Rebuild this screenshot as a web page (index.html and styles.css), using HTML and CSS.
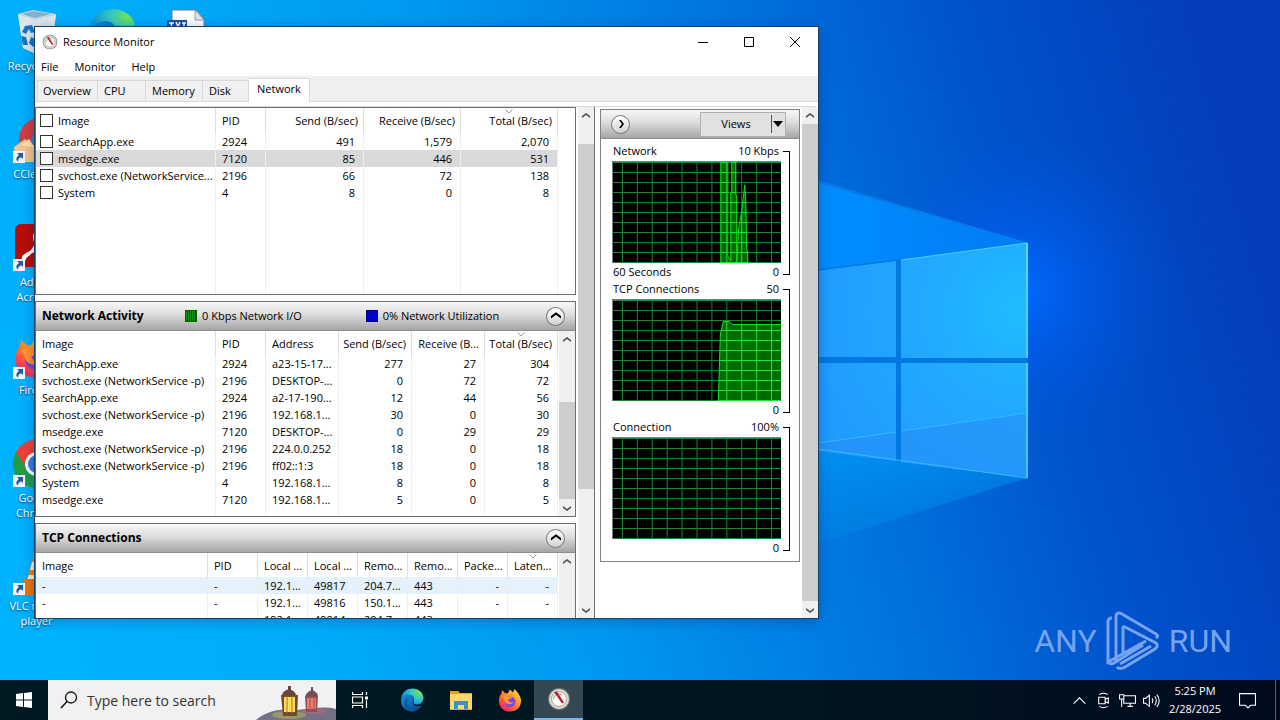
FILE: index.html
```html
<!DOCTYPE html>
<html lang="en">
<head>
<meta charset="utf-8">
<title>Resource Monitor</title>
<link rel="stylesheet" href="styles.css">
</head>
<body>
<svg class="defs" aria-hidden="true">
  <defs>
    <symbol id="up" viewBox="0 0 8 6"><path d="M0 5V3L4 0l4 3v2L4 2z"/></symbol>
    <symbol id="down" viewBox="0 0 8 6"><path d="M0 1v2l4 3 4-3V1L4 4z"/></symbol>
    <symbol id="sort" viewBox="0 0 8 5"><path d="M.5.5L4 4 7.500.5" fill="none" stroke="#999"/></symbol>
    <symbol id="shortcut" viewBox="0 0 12 12"><path d="M0 0h12v12H0z" fill="#f4f8fc"/><path d="M4 2h6v6L8.200 6.200C6 7 5.300 8 5 10.500 2.500 9 3 6 6 4z" fill="#245a9c"/></symbol>
    <symbol id="gauge" viewBox="0 0 24 24"><circle cx="12" cy="12" r="11" fill="#77776f"/><circle cx="12" cy="12" r="10" fill="#dddcd3"/><circle cx="12" cy="12" r="7.500" fill="#fff" stroke="#aaa396"/><path d="M6.500 12a5.500 5.500 0 0 1 9-4" fill="none" stroke="#7da17a"/><path d="M7 5l3-.5 7 11-2 1z" fill="#c31c26"/></symbol>
    <radialGradient id="edgeA" cx=".85" cy=".25" r=".9"><stop offset="0" stop-color="#6ee653"/><stop offset=".45" stop-color="#35c6c5"/><stop offset="1" stop-color="#0788d6"/></radialGradient>
    <linearGradient id="edgeB" x2="1" y2="1"><stop stop-color="#1590dc"/><stop offset="1" stop-color="#0b3f89"/></linearGradient>
    <symbol id="edge" viewBox="0 0 48 48"><path d="M2 24C2 10 12 1 25 1c13 0 22 9 22 19 0 9-7 13-14 13-5 0-7-2-6-5 4-9-3-14-10-14C9 14 3 19 2 24z" fill="url(#edgeA)"/><path d="M2 24c1-6 8-11 15-11 8 0 13 6 10 13-4 8 6 14 17 8C39 42 32 47 24 47 11 47 1 37 2 24z" fill="url(#edgeB)"/><path d="M17 19c-8 10-1 25 13 27-10 3-20-3-21-13-1-7 3-12 8-14z" fill="#14539d"/></symbol>
    <linearGradient id="ffA" x1="1" y1="0" x2=".2" y2="1"><stop stop-color="#fff04a"/><stop offset=".5" stop-color="#ff8a20"/><stop offset="1" stop-color="#f5186b"/></linearGradient>
    <symbol id="firefox" viewBox="0 0 48 48"><path d="M7 11l1-7 6 6 5 1 5-8 6 6 3-7c4 5 12 12 13 22 1 14-9 23-22 23S1 38 2 25c0-6 2-11 5-14z" fill="url(#ffA)"/><path d="M14 21c8-8 21-3 21 6 0 8-6 12-13 11-7-1-11-8-8-17z" fill="#7647dd"/><path d="M6 17c6-5 11-4 14 0h9c-2 5-7 4-9 7 1 4 7 6 12 4-6 8-18 5-20-4-1-4-3-6-6-7z" fill="#ff922c"/></symbol>
    <pattern id="grid" x="10" y="1" width="15" height="10" patternUnits="userSpaceOnUse"><path d="M.5 0v10M0 .5h15" stroke="#168632" fill="none"/></pattern>
    <pattern id="gridHot" x="10" y="1" width="15" height="10" patternUnits="userSpaceOnUse"><path d="M0 0h15v10H0z" fill="#006b00"/><path d="M.5 0v10M0 .5h15" stroke="#22e332" fill="none"/></pattern>
  </defs>
</svg>

<main class="desktop">
  <svg class="wallpaper" viewBox="0 0 1280 680" preserveAspectRatio="xMidYMid slice" aria-hidden="true">
    <defs>
      <linearGradient id="sky" gradientUnits="userSpaceOnUse" x1="0" y1="520" x2="1250" y2="180"><stop stop-color="#00b2ff"/><stop offset=".2" stop-color="#00acfa"/><stop offset=".42" stop-color="#0098f0"/><stop offset=".67" stop-color="#006fdc"/><stop offset=".82" stop-color="#0052cc"/><stop offset="1" stop-color="#043cba"/></linearGradient>
      <radialGradient id="glow" gradientUnits="userSpaceOnUse" cx="1020" cy="290" r="160"><stop stop-color="#006aff"/><stop offset=".4" stop-color="#0060f0" stop-opacity=".55"/><stop offset="1" stop-color="#0056d8" stop-opacity="0"/></radialGradient>
      <linearGradient id="beam" gradientUnits="userSpaceOnUse" x1="820" y1="0" x2="1027" y2="0"><stop stop-color="#008cff"/><stop offset="1" stop-color="#0090ff" stop-opacity=".6"/></linearGradient>
      <linearGradient id="beamLow" gradientUnits="userSpaceOnUse" x1="820" y1="450" x2="840" y2="550"><stop stop-color="#0092f2"/><stop offset="1" stop-color="#0083e2" stop-opacity=".5"/></linearGradient>
      <radialGradient id="pane" gradientUnits="userSpaceOnUse" cx="1020" cy="310" r="210"><stop stop-color="#20bbff"/><stop offset=".5" stop-color="#22a9ff"/><stop offset="1" stop-color="#209cff"/></radialGradient>
      <linearGradient id="edgeLine" x2="0" y2="1"><stop stop-color="#55dcff"/><stop offset="1" stop-color="#3cc5ff"/></linearGradient>
    </defs>
    <path d="M0 0h1280v680H0z" fill="url(#sky)"/>
    <circle cx="1020" cy="290" r="160" fill="url(#glow)"/>
    <path d="M700 148L1027 243V360H700z" fill="url(#beam)"/>
    <path d="M700 146L1027 243" stroke="#1ba0ff" stroke-opacity=".5" fill="none"/>
    <path d="M700 360h327v118L700 580z" fill="url(#beamLow)"/>
    <path d="M700 284L1027 243V478L700 436z" fill="#0078e2"/>
    <path d="M700 285l196-24v96H700zM901 260l126-17v115H901zM700 363h196v98l-196-25zM901 363h126v115l-126-16z" fill="url(#pane)"/>
    <path d="M700 461l196-29v29l-196-25zM901 431l126-18v65l-126-16z" fill="#2792fa" opacity=".7"/>
    <path d="M818 443l78-11M901 431l126-18M818 449l209 29" stroke="#32baff" fill="none"/>
    <path d="M901 260l126-17" stroke="#4bd0ff" fill="none"/>
    <path d="M1026 243h2v115h-2zM1026 363h2v115h-2z" fill="url(#edgeLine)"/>
  </svg>

  <div class="shortcuts">
    <div class="shortcut"><svg viewBox="0 0 48 48" class="pic"><path d="M5 6l15-4 23 4-5 36-17 3-11-5z" fill="#c2d8e5"/><path d="M5 6l16 6 22-5-5 35-17 3-11-5z" fill="#dce7ec"/><path d="M9 6l12-3 17 3-16 4z" fill="#82afc9"/><path d="M12 18l7-1 3 7-4 1-2-4-3 5-4-2zM8 28l5 1 2 8h-5zM18 29l6 3-4 7-4-4z" fill="#1774c8"/></svg><span>Recycle Bin</span></div>
    <div class="shortcut"><svg viewBox="0 0 48 48" class="pic"><circle cx="27" cy="23" r="21" fill="#ce3f40"/><circle cx="31" cy="25" r="13" fill="#3d82bd"/><path d="M1 31l11-8 12 10v13H2z" fill="#f1c58d"/><path d="M8 29l8-6 6 9z" fill="#ffe0ac"/><use href="#shortcut" y="35" width="12" height="12"/></svg><span>CCleaner</span></div>
    <div class="shortcut"><svg viewBox="0 0 48 48" class="pic"><rect x="2" width="44" height="43" rx="6" fill="#b80c08"/><path d="M12 33c9-6 14-15 12-22-1-5-5 2 0 9 4 7 13 11 13 6 0-4-12-2-23 4-7 4-2 8-2 3z" fill="none" stroke="#fff" stroke-width="3"/><use href="#shortcut" y="35" width="12" height="12"/></svg><span>Adobe Acrobat</span></div>
    <div class="shortcut"><svg viewBox="0 0 48 48" class="pic"><use href="#firefox" x="1" y="4" width="42" height="42"/><use href="#shortcut" y="35" width="12" height="12"/></svg><span>Firefox</span></div>
    <div class="shortcut"><svg viewBox="0 0 48 48" class="pic"><circle cx="24" cy="24" r="24" fill="#249b4a"/><path d="M3 12A24 24 0 0 1 45 12H24z" fill="#ed4036"/><path d="M3 12L15 30 24 12z" fill="#ed4036"/><path d="M45 12a24 24 0 0 1-21 36l11-20-9-16z" fill="#fbc92d"/><circle cx="24" cy="24" r="12" fill="#fff"/><circle cx="24" cy="24" r="9" fill="#347de8"/><use href="#shortcut" y="35" width="12" height="12"/></svg><span>Google Chrome</span></div>
    <div class="shortcut"><svg viewBox="0 0 48 48" class="pic"><path d="M22 2h5l8 30H14z" fill="#f47a11"/><path d="M19 14h11l2 8H17zM16 27h18l1 5H14z" fill="#eee"/><path d="M11 31h27l6 12-10 4H14l-7-4z" fill="#e97708"/><use href="#shortcut" y="35" width="12" height="12"/></svg><span>VLC media player</span></div>
    <div class="shortcut col2"><svg viewBox="0 0 48 48" class="pic" role="img" aria-label="Microsoft Edge"><use href="#edge" width="48" height="48"/></svg></div>
    <div class="shortcut col3"><svg viewBox="0 0 48 48" class="pic" role="img" aria-label="Text document"><path d="M8 2h24l8 9v36H8z" fill="#fff" stroke="#779"/><path d="M31 2v10h9z" fill="#e0e5eb" stroke="#99a"/><path d="M3 12h20v16H3z" fill="#174f9f"/><path d="M5 15h5M7.500 15v9M12 14l4 9M16 14l-4 9M18 15h4M20 15v9" stroke="#fff" stroke-width="1.500"/></svg></div>
  </div>

  <div class="watermark"><span>ANY</span><svg viewBox="0 0 56 62" aria-hidden="true"><path d="M7 8Q3 8 3 12V52L30 37 41 31M11 12V42M11 52V7Q11 1 17 4L51 24Q54 26 51 28M18 16L51 33Q54 36 50 39L20 57Q15 60 12 57M18 16V43M15 54L46 36M3 52Q5 55 9 53L38 35" fill="none" stroke="#77a3ee" stroke-width="3"/></svg><span>RUN</span></div>

  <section class="window" aria-label="Resource Monitor">
    <header class="titlebar">
      <svg class="appicon" aria-hidden="true"><use href="#gauge"/></svg>
      <h1>Resource Monitor</h1>
      <button class="winbtn" aria-label="Minimize"><svg viewBox="0 0 12 12"><path d="M1 6.500h10"/></svg></button>
      <button class="winbtn" aria-label="Maximize"><svg viewBox="0 0 12 12"><path d="M1.500 1.500h9v9h-9z"/></svg></button>
      <button class="winbtn" aria-label="Close"><svg viewBox="0 0 12 12"><path d="M1 1l10 10M11 1L1 11"/></svg></button>
    </header>
    <nav class="menu"><button>File</button><button>Monitor</button><button>Help</button></nav>
    <div class="tabs" role="tablist">
      <button class="tab t-over" role="tab">Overview</button><button class="tab t-cpu" role="tab">CPU</button><button class="tab t-mem" role="tab">Memory</button><button class="tab t-disk" role="tab">Disk</button><button class="tab t-net" role="tab" aria-selected="true">Network</button>
    </div>
    <div class="tabedge"></div>

    <div class="body">
      <div class="panels">
        <section class="panel">
          <div class="content">
            <table class="processes">
              <colgroup><col><col class="w50"><col class="w98"><col class="w97"><col class="w97"></colgroup>
              <thead><tr><th><label><input type="checkbox">Image</label></th><th>PID</th><th class="n">Send (B/sec)</th><th class="n">Receive (B/sec)</th><th class="n">Total (B/sec)<svg class="sort"><use href="#sort"/></svg></th></tr></thead>
              <tbody>
                <tr><td><label><input type="checkbox">SearchApp.exe</label></td><td>2924</td><td class="n">491</td><td class="n">1,579</td><td class="n">2,070</td></tr>
                <tr class="picked"><td><label><input type="checkbox">msedge.exe</label></td><td>7120</td><td class="n">85</td><td class="n">446</td><td class="n">531</td></tr>
                <tr><td><label><input type="checkbox">svchost.exe (NetworkService...</label></td><td>2196</td><td class="n">66</td><td class="n">72</td><td class="n">138</td></tr>
                <tr><td><label><input type="checkbox">System</label></td><td>4</td><td class="n">8</td><td class="n">0</td><td class="n">8</td></tr>
                <tr class="filler tall"><td></td><td></td><td></td><td></td><td></td></tr>
              </tbody>
            </table>
            <div class="gutter"></div>
          </div>
        </section>

        <section class="panel">
          <header class="bar"><h2>Network Activity</h2><span class="legend"><i class="sw green"></i>0 Kbps Network I/O</span><span class="legend"><i class="sw blue"></i>0% Network Utilization</span><button class="round" aria-label="Collapse"><svg><use href="#up"/></svg></button></header>
          <div class="content">
            <table>
              <colgroup><col><col class="w50"><col class="w73"><col class="w73"><col class="w73"><col class="w73"></colgroup>
              <thead><tr><th>Image</th><th>PID</th><th>Address</th><th class="n">Send (B/sec)</th><th class="n">Receive (B...</th><th class="n">Total (B/sec)<svg class="sort"><use href="#sort"/></svg></th></tr></thead>
              <tbody>
                <tr><td>SearchApp.exe</td><td>2924</td><td>a23-15-17...</td><td class="n">277</td><td class="n">27</td><td class="n">304</td></tr>
                <tr><td>svchost.exe (NetworkService -p)</td><td>2196</td><td>DESKTOP-...</td><td class="n">0</td><td class="n">72</td><td class="n">72</td></tr>
                <tr><td>SearchApp.exe</td><td>2924</td><td>a2-17-190...</td><td class="n">12</td><td class="n">44</td><td class="n">56</td></tr>
                <tr><td>svchost.exe (NetworkService -p)</td><td>2196</td><td>192.168.1...</td><td class="n">30</td><td class="n">0</td><td class="n">30</td></tr>
                <tr><td>msedge.exe</td><td>7120</td><td>DESKTOP-...</td><td class="n">0</td><td class="n">29</td><td class="n">29</td></tr>
                <tr><td>svchost.exe (NetworkService -p)</td><td>2196</td><td>224.0.0.252</td><td class="n">18</td><td class="n">0</td><td class="n">18</td></tr>
                <tr><td>svchost.exe (NetworkService -p)</td><td>2196</td><td>ff02::1:3</td><td class="n">18</td><td class="n">0</td><td class="n">18</td></tr>
                <tr><td>System</td><td>4</td><td>192.168.1...</td><td class="n">8</td><td class="n">0</td><td class="n">8</td></tr>
                <tr><td>msedge.exe</td><td>7120</td><td>192.168.1...</td><td class="n">5</td><td class="n">0</td><td class="n">5</td></tr>
                <tr class="filler short"><td></td><td></td><td></td><td></td><td></td><td></td></tr>
              </tbody>
            </table>
            <div class="scroll s-activity"><button aria-label="Scroll up"><svg><use href="#up"/></svg></button><div class="track"><div class="thumb"></div></div><button aria-label="Scroll down"><svg><use href="#down"/></svg></button></div>
          </div>
        </section>

        <section class="panel">
          <header class="bar"><h2>TCP Connections</h2><button class="round" aria-label="Collapse"><svg><use href="#up"/></svg></button></header>
          <div class="content">
            <table>
              <colgroup><col><col class="w50"><col class="w50"><col class="w50"><col class="w50"><col class="w50"><col class="w50"><col class="w50"></colgroup>
              <thead><tr><th>Image</th><th>PID</th><th>Local ...</th><th>Local ...</th><th>Remo...</th><th>Remo...</th><th>Packe...</th><th>Laten...<svg class="sort"><use href="#sort"/></svg></th></tr></thead>
              <tbody>
                <tr class="hover"><td>-</td><td>-</td><td>192.1...</td><td>49817</td><td>204.7...</td><td>443</td><td class="n">-</td><td class="n">-</td></tr>
                <tr><td>-</td><td>-</td><td>192.1...</td><td>49816</td><td>150.1...</td><td>443</td><td class="n">-</td><td class="n">-</td></tr>
                <tr><td>-</td><td>-</td><td>192.1...</td><td>49814</td><td>204.7...</td><td>443</td><td class="n">-</td><td class="n">-</td></tr>
              </tbody>
            </table>
            <div class="scroll s-tcp"><button aria-label="Scroll up"><svg><use href="#up"/></svg></button><div class="track"></div></div>
          </div>
        </section>
      </div>
      <div class="scroll s-left"><button aria-label="Scroll up"><svg><use href="#up"/></svg></button><div class="track"><div class="thumb"></div></div><button aria-label="Scroll down"><svg><use href="#down"/></svg></button></div>

      <aside class="side">
        <div class="charts">
          <header class="bar sidebar"><button class="round" aria-label="Hide graphs"><svg viewBox="0 0 8 8"><path d="M2 0h2l3 4-3 4H2l3-4z"/></svg></button><button class="views"><span>Views</span><i></i><svg viewBox="0 0 10 6"><path d="M0 0h10L5 6z"/></svg></button></header>
          <figure class="chart">
            <figcaption><span>Network</span><span>10 Kbps</span></figcaption>
            <svg viewBox="0 0 170 102" preserveAspectRatio="none"><path d="M0 0h170v102H0z"/><path d="M0 0h170v102H0z" fill="url(#grid)"/><path d="M109 102V1h7v95l3 2V32l1-1V1h5v33l1 1v66l2-34 3-17 3-26 1 16 1 48 1 3v11z" fill="url(#gridHot)"/><path d="M109.500 102V1M116.500 1v94l3 5V32l1-1V1M124.500 1v33l1 1V101l2-34 3-17 3-26 1 16 1 48 1 3v11" fill="none" stroke="#0fe51e"/><path d="M.5 102V.5H170" fill="none" stroke="#808080"/></svg>
            <div class="foot"><span>60 Seconds</span><span>0</span></div>
          </figure>
          <figure class="chart">
            <figcaption><span>TCP Connections</span><span>50</span></figcaption>
            <svg viewBox="0 0 170 102" preserveAspectRatio="none"><path d="M0 0h170v102H0z"/><path d="M0 0h170v102H0z" fill="url(#grid)"/><path d="M107 102l2-67 3-13h6l3 4h49v76z" fill="url(#gridHot)"/><path d="M107 102l2-67 3-12.500h6l3 3h49" fill="none" stroke="#0fe51e"/><path d="M.5 102V.5H170" fill="none" stroke="#808080"/></svg>
            <div class="foot"><span></span><span>0</span></div>
          </figure>
          <figure class="chart">
            <figcaption><span>Connection</span><span>100%</span></figcaption>
            <svg viewBox="0 0 170 102" preserveAspectRatio="none"><path d="M0 0h170v102H0z"/><path d="M0 0h170v102H0z" fill="url(#grid)"/><path d="M.5 102V.5H170" fill="none" stroke="#808080"/></svg>
            <div class="foot"><span></span><span>0</span></div>
          </figure>
        </div>
        <div class="scroll s-right"><button aria-label="Scroll up"><svg><use href="#up"/></svg></button><div class="track"><div class="thumb"></div></div><button aria-label="Scroll down"><svg><use href="#down"/></svg></button></div>
      </aside>
    </div>
  </section>
</main>

<footer class="taskbar">
  <button class="task start" aria-label="Start"><svg viewBox="0 0 16 16" class="i16"><path d="M0 2l7-1v6.500H0zM8 1l8-1v7.500H8zM0 8.500h7V15l-7-1zM8 8.500h8V16l-8-1z" fill="#fff"/></svg></button>
  <label class="search">
    <svg viewBox="0 0 18 18" class="i18"><circle cx="11" cy="6.500" r="5.500" fill="none" stroke="#111" stroke-width="1.300"/><path d="M7 10.500L1 17" stroke="#111" stroke-width="1.500"/></svg>
    <input type="text" placeholder="Type here to search" aria-label="Type here to search">
    <svg viewBox="0 0 80 40" class="lamps" aria-hidden="true"><path d="M0 40C14 28 30 29 42 30c14-2 28-4 38-1v11z" fill="#767086"/><ellipse cx="33" cy="35" rx="17" ry="4" fill="#9b956b"/><ellipse cx="58" cy="31" rx="12" ry="3" fill="#a06c78"/><path d="M26 16q0-5 7-7 7 2 7 7zM32 6h3v5h-3z" fill="#66473c"/><path d="M25 15h17l-1 21H27z" fill="#6e4b32"/><path d="M28 17h11v15H28z" fill="#ffdc54"/><path d="M31 16v17M36 16v17" stroke="#a9762d"/><path d="M49 17q1-5 7-7 6 2 6 7zM55 7h2v5h-2z" fill="#705057"/><path d="M49 16h13l-1 16H50z" fill="#85525a"/><path d="M51 18h9v11h-9z" fill="#f07a6d"/><path d="M54 17v13M58 17v13" stroke="#a84d4b"/></svg>
  </label>
  <button class="task taskview" aria-label="Task view"><svg viewBox="0 0 16 16" class="i16" fill="none" stroke="#fff" stroke-width="1.200"><path d="M.5 0v2.500h10V0M.5 5h10v6H.500zM.5 16v-2.500h10V16M14.500 0v3M14.500 8.500V16"/><path d="M13 4.500h3v3h-3z" fill="#fff" stroke="none"/></svg></button>
  <button class="task" aria-label="Microsoft Edge"><svg class="i24"><use href="#edge"/></svg></button>
  <button class="task" aria-label="File Explorer"><svg viewBox="0 0 24 24" class="i24"><path d="M1 3h8l2 2h12v17H1z" fill="#e6a326"/><path d="M1 6h22v15H1z" fill="#ffd868"/><path d="M5 13h14v8h-4v-4H9v4H5z" fill="#3a91ca"/></svg></button>
  <button class="task" aria-label="Firefox"><svg class="i24"><use href="#firefox"/></svg></button>
  <button class="task active" aria-label="Resource Monitor"><svg class="i24"><use href="#gauge"/></svg></button>
  <div class="tray">
    <button aria-label="Show hidden icons"><svg viewBox="0 0 16 16"><path d="M2.500 11L8 5.500 13.500 11"/></svg></button>
    <button aria-label="Meet Now"><svg viewBox="0 0 16 16"><path d="M3.500 5h6v6h-6zM9.500 7l3-1.500v5l-3-1.500M4 2.500q4-2.500 8 0M4 13.500q4 2.500 8 0"/></svg></button>
    <button aria-label="Network"><svg viewBox="0 0 16 16"><path d="M5 3.500h10.500v7H4.500V7M8 13.500h5M10.500 11v2.500M.5 2.500h4v4h-4zM2.500 6.500V14"/></svg></button>
    <button aria-label="Volume"><svg viewBox="0 0 16 16"><path d="M.5 6v4.500h2L6 13.500V3L2.500 6zM8.500 6q1.500 2 0 4.500M11 4q3 4 0 8.500M13 2.500q4.500 5.500 0 11.500"/></svg></button>
    <div class="clock"><time>5:25 PM</time><time>2/28/2025</time></div>
    <button class="notes" aria-label="Notifications"><svg viewBox="0 0 16 16"><path d="M.5 1.500h15v11H11l-2.500 2.500L6 12.500H.500z"/></svg></button>
    <div class="peek"></div>
  </div>
</footer>
</body>
</html>
```

FILE: styles.css
```css
* { box-sizing: border-box; }
html, body { height: 100%; }
body {
  margin: 0;
  display: flex;
  flex-direction: column;
  overflow: hidden;
  font: 11px/16px "Open Sans", "Noto Sans", sans-serif;
  color: #000;
}
button, input { font: inherit; color: inherit; }
button { margin: 0; padding: 0; border: 0; background: none; }
h1, h2, figure { margin: 0; font: inherit; }
svg { display: block; flex: none; }
.defs { position: absolute; width: 0; height: 0; }

.desktop { position: relative; flex: 1; min-height: 0; overflow: hidden; background: #00a5f5; }
.wallpaper { position: absolute; inset: 0; width: 100%; height: 100%; }

/* Desktop shortcuts */
.shortcuts {
  position: absolute;
  inset: 0 auto auto 0;
  display: grid;
  grid-template-rows: repeat(6, 108px);
  grid-template-columns: 73px 77px 75px;
  grid-auto-flow: column;
}
.shortcut { display: flex; flex-direction: column; align-items: center; padding-top: 8px; color: #fff; text-align: center; line-height: 15px; }
.shortcut span { width: 64px; padding-top: 2px; text-shadow: 0 1px 2px #035; }
.shortcut:first-child span { width: 73px; }
.col2 { grid-area: 1 / 2; }
.col3 { grid-area: 1 / 3; }
.pic { width: 48px; height: 48px; }

.watermark {
  position: absolute;
  right: 48px;
  bottom: 8px;
  display: flex;
  align-items: center;
  gap: 8px;
  color: #77a3ee;
  font: 32px/40px "Roboto", sans-serif;
}
.watermark svg { width: 56px; height: 62px; }

/* Window frame */
.window {
  position: absolute;
  inset: 26px 461px 61px 34px;
  display: flex;
  flex-direction: column;
  border: 1px solid #174065;
  background: #fff;
  box-shadow: 0 2px 12px rgba(0, 20, 80, .3);
}
.titlebar { display: flex; align-items: center; height: 30px; padding-left: 7px; }
.appicon { width: 16px; height: 16px; margin-right: 5px; }
.titlebar h1 { flex: 1; }
.winbtn { display: grid; place-items: center; width: 46px; height: 30px; }
.winbtn svg { width: 12px; height: 12px; fill: none; stroke: #000; }
.menu { display: flex; gap: 16px; height: 19px; padding-left: 6px; line-height: 19px; }
.tabs { display: flex; align-items: flex-end; height: 26px; padding: 0 2px; background: #f0f0f0; border-bottom: 1px solid #d9d9d9; }
.tab { height: 21px; padding-left: 6px; text-align: left; border: 1px solid #d9d9d9; border-width: 1px 1px 0 0; background: #f0f0f0; }
.t-over { width: 61px; padding-left: 5px; border-left-width: 1px; }
.t-cpu { width: 48px; }
.t-mem { width: 57px; }
.t-disk { width: 46px; }
.t-net { width: 61px; height: 24px; margin-bottom: -1px; padding: 0 0 3px 8px; background: #fff; }
.tabedge { height: 5px; margin: 0 2px 0 1px; border-bottom: 1px solid #d9d9d9; }

.body { display: flex; flex: 1; min-height: 0; }
.panels { display: flex; flex: 1; min-width: 0; flex-direction: column; gap: 6px; overflow: hidden; }
.panel { flex: none; border: 1px solid #6e6e6e; background: #fff; }

.bar { display: flex; align-items: center; height: 29px; padding: 0 10px 0 6px; background: linear-gradient(#f8f8f8, #dcdcdc 45%, #a5a5a5); border-bottom: 1px solid #8d8d8d; }
.bar h2 { width: 145px; font-size: 12px; font-weight: 700; }
.legend { display: flex; align-items: center; gap: 5px; width: 183px; }
.sw { width: 12px; height: 12px; border: 1px solid; }
.green { border-color: #006000; background: repeating-linear-gradient(90deg, transparent 0 1px, #0f4d0f 1px 2px), #168d16; }
.blue { border-color: #00008c; background: #0000cb; }
.round { display: grid; place-items: center; width: 19px; height: 19px; margin-left: auto; border: 1px solid #777; border-radius: 50%; background: linear-gradient(#fff, #d2d2d2); }
.round svg { width: 10px; height: 8px; }

/* Process tables */
.content { display: flex; }
.gutter { width: 17px; }
table { flex: 1; min-width: 0; width: 0; table-layout: fixed; border-collapse: separate; border-spacing: 0; }
.w50 { width: 50px; }
.w73 { width: 73px; }
.w97 { width: 97px; }
.w98 { width: 98px; }
th, td { overflow: hidden; height: 17px; padding: 0 0 0 6px; border-right: 1px solid #eee; font-weight: 400; line-height: 17px; text-align: left; white-space: nowrap; }
th { position: relative; height: 24px; border-color: #dedede; }
.processes th { height: 25px; }
td.n, th.n { padding: 0 8px 0 0; text-align: right; }
th.n { padding-right: 5px; }
.sort { position: absolute; top: 1px; left: 50%; width: 8px; height: 5px; margin-left: -4px; }
.picked { background: #d9d9d9; }
.hover { background: #e5f1fb; }
.tall td { height: 93px; }
.short td { height: 8px; }
td label, th label { display: flex; align-items: center; gap: 5px; margin-left: -2px; }
input[type="checkbox"] { appearance: none; flex: none; width: 13px; height: 13px; margin: 0; border: 1px solid #333; background: #fff; }

/* Scroll bars */
.scroll { display: flex; flex-direction: column; flex: none; width: 16px; background: #f0f0f0; }
.scroll button { display: grid; place-items: center; height: 17px; }
.scroll svg { width: 8px; height: 6px; fill: #505050; }
.track { display: grid; flex: 1; }
.thumb { grid-row: 2; background: #cdcdcd; }
.s-activity, .s-tcp { margin-left: 1px; }
.s-activity .track { grid-template-rows: 54fr 97fr 0fr; }
.s-left { margin-left: 2px; }
.s-left .track { grid-template-rows: 20fr 346fr 112fr; }
.s-right { margin-left: 2px; }
.s-right .track { grid-template-rows: 0fr 1fr 0fr; }

/* Graph column */
.side { display: flex; flex: none; align-items: stretch; width: 224px; padding-left: 5px; border-left: 1px solid #6e6e6e; }
.charts { flex: 1; align-self: flex-start; margin-top: 2px; padding-bottom: 8px; border: 1px solid #808080; }
.sidebar { padding: 0 13px 0 10px; }
.sidebar .round { margin: 0; }
.sidebar .round svg { width: 8px; height: 8px; }
.views { display: flex; align-items: center; width: 86px; height: 25px; margin-left: auto; padding-right: 2px; border: 1px solid #b0b0b0; background: #e1e1e1; }
.views span { flex: 1; text-align: center; }
.views i { width: 1px; height: 18px; margin-right: 1px; background: #555; }
.views svg { width: 10px; height: 6px; }
.chart { position: relative; display: flex; flex-direction: column; height: 138px; margin: 0 18px 0 11px; padding-top: 4px; }
.chart > svg { width: 100%; height: 102px; margin: 2px 0 1px; }
.chart::after { content: ""; position: absolute; top: 12px; right: -9px; width: 6px; height: 122px; border: 1px solid #000; border-left: 0; }
figcaption, .foot { display: flex; justify-content: space-between; padding: 0 2px 0 1px; }

/* Taskbar */
.taskbar { display: flex; flex: none; height: 40px; background: linear-gradient(90deg, #001a24, #00151f 60%, #000b1e); color: #fff; }
.task { display: grid; place-items: center; width: 49px; }
.start { width: 48px; }
.taskview { width: 51px; padding-right: 3px; }
.active { background: #344853; border-bottom: 2px solid #76b9ed; }
.i16 { width: 16px; height: 16px; }
.i18 { width: 18px; height: 18px; }
.i24 { width: 24px; height: 24px; }
.search { display: flex; align-items: center; width: 288px; padding-left: 12px; background: #f1f1f1; }
.search input { flex: 1; min-width: 0; height: 38px; margin-left: 9px; padding: 0; border: 0; outline: 0; background: none; font-size: 14px; }
.search input::placeholder { color: #333; opacity: 1; }
.lamps { width: 80px; height: 40px; }
.tray { display: flex; align-items: stretch; margin-left: auto; }
.tray button { display: grid; place-items: center; width: 24px; }
.tray svg { width: 17px; height: 17px; fill: none; stroke: #fff; stroke-width: 1; }
.clock { display: flex; flex-direction: column; justify-content: center; width: 64px; text-align: center; line-height: 18px; }
.tray .notes { width: 40px; }
.peek { width: 5px; margin-left: 8px; border-left: 1px solid #56606a; }
```
